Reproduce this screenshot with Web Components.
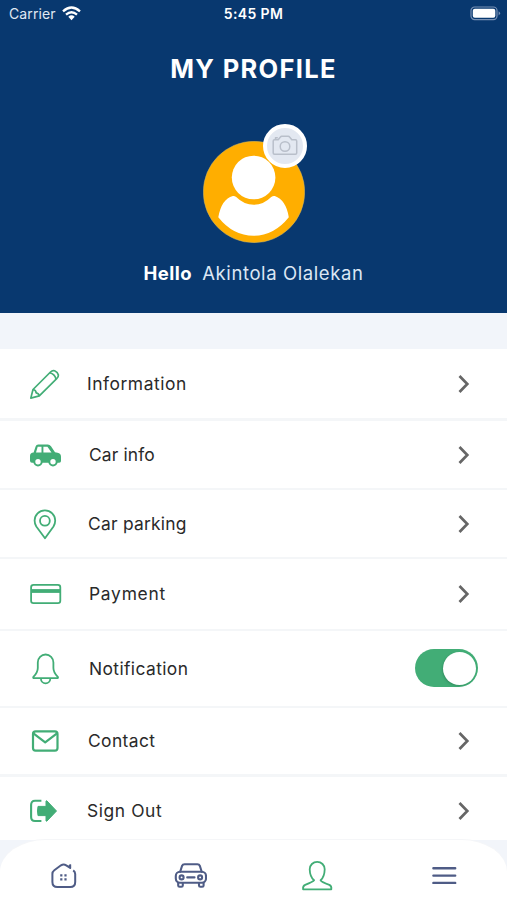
<!DOCTYPE html>
<html lang="en">
<head>
<meta charset="utf-8">
<title>My Profile</title>
<style>
  body {
    margin: 0;
    background: #f2f5fa;
    font-family: Inter, "Open Sans", sans-serif;
  }
</style>
</head>
<body>
<profile-page>
  <profile-header slot="header" name="Akintola Olalekan"></profile-header>
  <menu-row icon="pencil" style="--h:72px;--line:3px;--x:87px;--ls:.55px">Information</menu-row>
  <menu-row icon="car" style="--h:69px;--x:89px;--ls:.15px">Car info</menu-row>
  <menu-row icon="pin" style="--h:69px;--x:88px;--ls:.25px">Car parking</menu-row>
  <menu-row icon="card" style="--h:72px;--x:89px;--ls:.75px">Payment</menu-row>
  <menu-row icon="bell" toggle style="--h:77px;--x:89px;--ls:.4px">Notification</menu-row>
  <menu-row icon="mail" style="--h:69px;--line:3px;--x:88px;--ls:.4px">Contact</menu-row>
  <menu-row icon="exit" style="--h:63px;--line:0px;--top:4px;--x:87px;--ls:.6px">Sign Out</menu-row>
  <tab-bar slot="footer"></tab-bar>
</profile-page>

<script>
const ICONS = {
  pencil: `<g fill="none" stroke="currentColor" stroke-width="1.7" stroke-linejoin="round">
    <path d="M1.8 30.1 4 21.5 21.5 4Q23.5 2 25.6 2.8 28.8 4.2 29.4 7 29.6 9 27.7 10.6L10.3 27.9Z"/>
    <path d="M4 21.5Q6.9 22 7.2 24.8 9.8 25.2 10.3 27.9M20.8 4.8Q25.6 6 27 11"/></g>`,
  car: `<path fill="currentColor" d="M4.6 13.5 6.6 7.5Q7.3 5.5 9.2 5.5H18.8Q20.8 5.5 22 7.2L26 13.2 28.5 13.7Q32 14.4 32 17.7V22Q32 23.8 30.2 23.8H3Q1 23.8 1 21.8V17Q1 13.8 4.6 13.5Z"/>
    <path fill="#fff" d="M7 13.5 8.7 7.8H12.5V13.5ZM14.4 7.8H18.4L22.5 13.5H14.4Z"/>
    <g fill="#fff" stroke="currentColor" stroke-width="2"><circle cx="9" cy="22.7" r="3.7"/><circle cx="24" cy="22.7" r="3.7"/></g>`,
  pin: `<g fill="none" stroke="currentColor" stroke-width="1.8" stroke-linejoin="round">
    <path d="M16 30.2 7.3 18.5Q5.6 15.8 5.6 12.5A10.3 10.2 0 0 1 26.2 12.5Q26.2 15.8 24.5 18.5Z"/><circle cx="15.9" cy="12.8" r="4.9"/></g>`,
  card: `<rect x="2.1" y="6.9" width="29.2" height="18.2" rx="2.4" fill="none" stroke="currentColor" stroke-width="1.8"/>
    <path fill="currentColor" d="M2 11.1H31.5V14.9H2Z"/>`,
  bell: `<g fill="none" stroke="currentColor" stroke-width="1.8" stroke-linejoin="round">
    <path d="M4.2 24.2Q8.8 19.5 8.8 15V9.5A7.8 8 0 0 1 24.4 9.5V15Q24.4 19.5 29 24.2 29.2 25.2 28.2 25.2H5Q4 25.2 4.2 24.2Z"/><path d="M11.9 25.4a4.7 4.9 0 0 0 9.4 0"/></g>`,
  mail: `<g fill="none" stroke="currentColor" stroke-width="2.2" stroke-linejoin="round">
    <rect x="4" y="6.3" width="24.5" height="19.4" rx="2.6"/><path d="M4.4 8.3 16.2 17.3 28 8.3"/></g>`,
  exit: `<path d="M12.4 5.8H6Q2.1 5.8 2.1 10V22Q2.1 26 6 26H12.4" fill="none" stroke="currentColor" stroke-width="2.1"/>
    <path fill="currentColor" stroke="currentColor" stroke-linejoin="round" d="M9 11.4H17V6.2Q17.2 5.3 18 6L27.5 16 18 26Q17.2 26.6 17 25.8V20.6H9Q8 16 9 11.4Z"/>`,
  home: `<path d="M27.2 11.4Q29.2 12.8 29.2 15V23Q29.2 28 24.2 28H11.4Q6.4 28 6.4 23V15Q6.4 12.6 8.3 11.2L15 6.3Q17.6 4.6 20.2 6.3L24.2 8.9V5.4" fill="none" stroke="currentColor" stroke-width="2" stroke-linejoin="round"/>
    <path fill="currentColor" d="M21.4 7.6 24.6 5V9.8ZM14.2 15.3h2.2v2.2h-2.2zM18.4 15.3h2.2v2.2h-2.2zM14.2 19.3h2.2v2.2h-2.2zM18.4 19.3h2.2v2.2h-2.2z"/>`,
  carFront: `<g fill="none" stroke="currentColor" stroke-width="2.1" stroke-linejoin="round" stroke-linecap="round">
    <path d="M7.2 12.8 9 7Q9.7 5.3 11.6 5.3H24.4Q26.2 5.3 26.9 7L28.7 12.8"/>
    <rect x="2.8" y="12.8" width="30.2" height="11" rx="4.2"/>
    <circle cx="8.6" cy="18.4" r="2"/><circle cx="27.1" cy="18.4" r="2"/><path d="M14.2 18.4H21.5M5.2 24V26.4Q5.2 27.8 6.6 27.8H8.4Q9.8 27.8 9.8 26.4V24M26 24V26.4Q26 27.8 27.4 27.8H29.2Q30.6 27.8 30.6 26.4V24"/></g>`,
  person: `<path d="M14.1 21.3Q9.9 18 9.7 10.3A7.5 7.5 0 0 1 24.7 10.3Q24.5 18 20.6 21.3 21.3 22.8 29.3 25.9 31.8 27 31.3 30.4H3.1Q2.6 27 5.2 25.9 13.1 22.8 14.1 21.3Z" fill="none" stroke="currentColor" stroke-width="1.8" stroke-linejoin="round"/>`,
  menu: `<path d="M6.4 9.3H28.2M6.4 16.6H28.2M6.4 23.9H28.2" stroke="currentColor" stroke-width="2.4" stroke-linecap="round"/>`
};

class StatusBar extends HTMLElement {
  constructor() {
    super();
    this.attachShadow({ mode: 'open' });
    this.shadowRoot.innerHTML = `
      <style>
        :host {
          display: grid;
          grid-template-columns: 1fr auto 1fr;
          align-items: center;
          height: 27px;
          padding: 0 6px 0 9px;
          font-size: 14px;
          line-height: 27px;
          color: #fff;
        }
        .carrier { display: flex; align-items: center; gap: 6px; color: #e0e8f3; letter-spacing: .1px; }
        .time { margin-right: 3px; font-weight: 600; letter-spacing: .35px; }
        .battery { justify-self: end; }
        svg { display: block; }
      </style>
      <div class="carrier"><span>Carrier</span>
        <svg width="19" height="15" viewBox="0 0 19 15" fill="none" stroke="#fff" stroke-width="2.3">
          <path d="M1 5.3Q9.5-2.4 18 5.3M4 8.7Q9.5 3.8 15 8.7"/>
          <path d="M6.3 10.7Q9.5 8 12.7 10.7L9.5 14.2Z" fill="#fff" stroke="none"/>
        </svg>
      </div>
      <span class="time">5:45 PM</span>
      <svg class="battery" width="31" height="15" viewBox="0 0 31 15">
        <rect x="1" y="1" width="26" height="12.6" rx="3.6" fill="none" stroke="#7891b5" stroke-width="1.2"/>
        <rect x="2.8" y="2.8" width="22.5" height="9" rx="2" fill="#fff"/>
        <path d="M28.6 5.2Q31.6 7.2 28.6 9.4Z" fill="#7891b5"/>
      </svg>`;
  }
}
customElements.define('status-bar', StatusBar);

class ProfileAvatar extends HTMLElement {
  constructor() {
    super();
    this.attachShadow({ mode: 'open' });
    this.shadowRoot.innerHTML = `
      <style>
        :host { display: block; position: relative; width: 102px; height: 102px; }
        svg { display: block; }
        .badge {
          position: absolute;
          top: -17.5px;
          right: -2px;
          display: grid;
          place-items: center;
          box-sizing: border-box;
          width: 44px;
          height: 44px;
          border: 4px solid #fff;
          border-radius: 50%;
          background: #e3e8f1;
        }
      </style>
      <svg width="102" height="102" viewBox="0 0 102 102">
        <circle cx="51" cy="51" r="50.7" fill="#ffae00" stroke="#c8b568" stroke-width=".5"/>
        <circle cx="50.6" cy="36.5" r="21.8" fill="#fff"/>
        <path fill="#fff" d="M15.3 76.3Q18.5 58 29.8 55 31.5 54.7 33.2 56 41 63.8 50.8 63.8 60.5 63.8 68.2 56 70 54.7 71.8 55.1 83 59 85.8 76.3 71 94.8 50.6 94.8 30 94.8 15.3 76.3Z"/>
      </svg>
      <div class="badge">
        <svg width="26" height="21" viewBox="0 0 26 21" fill="none" stroke="#b9bfca" stroke-width="1.5" stroke-linejoin="round">
          <path d="M2.5 4.8H6.2L8.4 2Q8.9 1.3 9.8 1.3H16.2Q17.1 1.3 17.6 2L19.8 4.8H23.4Q24.7 4.8 24.7 6.1V18.1Q24.7 19.3 23.4 19.3H2.5Q1.2 19.3 1.2 18.1V6.1Q1.2 4.8 2.5 4.8Z"/>
          <circle cx="13" cy="11.5" r="4.8"/><path d="M3.5 4.3V2.8H5.8"/>
        </svg>
      </div>`;
  }
}
customElements.define('profile-avatar', ProfileAvatar);

class ProfileHeader extends HTMLElement {
  connectedCallback() {
    this.attachShadow({ mode: 'open' });
    this.shadowRoot.innerHTML = `
      <style>
        :host { display: block; height: 313px; background: #08386f; color: #fff; }
        .content { display: flex; flex-direction: column; align-items: center; }
        h1 { margin: 26px 0 0; font-size: 25.5px; line-height: 31px; font-weight: 700; letter-spacing: 1.3px; }
        profile-avatar { margin: 57px 0 0 1px; }
        .hello { display: flex; gap: 10px; margin-top: 18px; font-size: 18.5px; line-height: 24px; }
        b { letter-spacing: .5px; }
        .name { color: #dce7f4; letter-spacing: .6px; }
      </style>
      <status-bar></status-bar>
      <div class="content">
        <h1>MY PROFILE</h1>
        <profile-avatar></profile-avatar>
        <div class="hello"><b>Hello</b><span class="name">${this.getAttribute('name')}</span></div>
      </div>`;
  }
}
customElements.define('profile-header', ProfileHeader);

class ToggleSwitch extends HTMLElement {
  constructor() {
    super();
    this.attachShadow({ mode: 'open' });
    this.shadowRoot.innerHTML = `
      <style>
        :host {
          display: flex;
          justify-content: flex-end;
          align-items: center;
          box-sizing: border-box;
          width: 63px;
          height: 38px;
          margin-bottom: 1px;
          padding-right: 2px;
          border-radius: 19px;
          background: #42ad76;
        }
        i { width: 33px; height: 33px; border-radius: 50%; background: #fff; box-shadow: -1px 1px 2px #2b7d5688; }
      </style>
      <i></i>`;
  }
}
customElements.define('toggle-switch', ToggleSwitch);

class MenuRow extends HTMLElement {
  connectedCallback() {
    const end = this.hasAttribute('toggle')
      ? '<toggle-switch></toggle-switch>'
      : '<svg class="chevron" width="13" height="20" viewBox="0 0 13 20" fill="none" stroke="#666" stroke-width="2.7"><path d="M2.5 2 10.3 10 2.5 18"/></svg>';
    this.attachShadow({ mode: 'open' });
    this.shadowRoot.innerHTML = `
      <style>
        :host {
          display: flex;
          align-items: center;
          box-sizing: border-box;
          height: var(--h);
          padding: var(--top, 0) 29px 0 29px;
          border-bottom: var(--line, 2px) solid #f4f6f8;
          background: #fff;
          color: #2a2a2a;
          font-size: 17.4px;
          line-height: 24px;
          letter-spacing: var(--ls);
        }
        .icon { flex: none; color: #42ad76; }
        .label { flex: 1; margin-left: calc(var(--x) - 62px); }
        .chevron { margin-right: 8px; }
      </style>
      <svg class="icon" width="33" height="32" viewBox="0 0 33 32">${ICONS[this.getAttribute('icon')]}</svg>
      <span class="label"><slot></slot></span>
      ${end}`;
  }
}
customElements.define('menu-row', MenuRow);

class TabBar extends HTMLElement {
  constructor() {
    super();
    this.attachShadow({ mode: 'open' });
    const tabs = ['home', 'carFront', 'person', 'menu'];
    this.shadowRoot.innerHTML = `
      <style>
        :host {
          display: grid;
          grid-template-columns: repeat(4, 1fr);
          place-items: center;
          box-sizing: border-box;
          height: 60px;
          padding-top: 11px;
          border-radius: 46px 46px 0 0 / 32px 32px 0 0;
          box-shadow: 0 -1px #f5f6f8;
          background: #fff;
          color: #4f5c86;
        }
        .person { color: #42ad76; }
      </style>
      ${tabs.map(t => `<svg class="${t}" width="34" height="34" viewBox="0 0 34 34">${ICONS[t]}</svg>`).join('')}`;
  }
}
customElements.define('tab-bar', TabBar);

class ProfilePage extends HTMLElement {
  constructor() {
    super();
    this.attachShadow({ mode: 'open' });
    this.shadowRoot.innerHTML = `
      <style>
        :host { display: flex; flex-direction: column; width: 507px; height: 900px; overflow: hidden; }
        main { margin-top: 36px; }
      </style>
      <slot name="header"></slot>
      <main><slot></slot></main>
      <slot name="footer"></slot>`;
  }
}
customElements.define('profile-page', ProfilePage);
</script>
</body>
</html>
